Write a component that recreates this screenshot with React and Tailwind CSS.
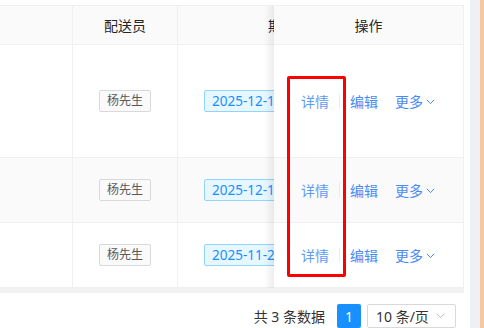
import React from "react";

const font = { fontFamily: '"Noto Sans", "Noto Sans CJK SC", sans-serif' };

function Chevron({ className }) {
  return (
    <svg className={className} width="9" height="6" viewBox="0 0 9 6" fill="none">
      <path d="M0.8 0.8 L4.5 4.6 L8.2 0.8" stroke="currentColor" strokeWidth="1" />
    </svg>
  );
}

const rows = [
  { h: "h-[113px]", bg: "bg-white", date: "2025-12-15 09:00-18:00" },
  { h: "h-[65px]", bg: "bg-[#fafafa]", date: "2025-12-12 09:00-18:00" },
  { h: "h-[65px]", bg: "bg-white", date: "2025-11-28 09:00-18:00" },
];

export default function App() {
  return (
    <div className="w-[484px] h-[328px] bg-white flex overflow-hidden text-[14px] text-[#262626]" style={font}>
      <div className="w-[464px] flex-none flex flex-col pt-[5px]">
        <div className="flex border-t border-r border-[#f0f0f0]">
          {/* scrolling area */}
          <div className="w-[274px] flex-none overflow-hidden">
            <div className="w-[520px]">
              <div className="flex h-[39px] bg-[#fafafa] border-b border-[#f0f0f0]">
                <div className="w-[73px] flex-none border-r border-[#f0f0f0]" />
                <div className="w-[105px] flex-none border-r border-[#f0f0f0] flex items-center justify-center">配送员</div>
                <div className="w-[266px] flex-none flex items-center pl-[90px]">期望送达时间</div>
              </div>
              {rows.map((r, i) => (
                <div key={i} className={`flex ${r.h} ${r.bg} border-b border-[#f0f0f0]`}>
                  <div className="w-[73px] flex-none border-r border-[#f0f0f0]" />
                  <div className="w-[105px] flex-none border-r border-[#f0f0f0] flex items-center justify-center">
                    <span className="h-[22px] px-[7px] border border-[#d9d9d9] bg-[#fafafa] rounded-[2px] text-[12px] leading-[20px] text-[#595959]">
                      杨先生
                    </span>
                  </div>
                  <div className="w-[266px] flex-none flex items-center pl-[26px]">
                    <span className="h-[22px] px-[7px] border border-[#91d5ff] bg-[#e6f7ff] rounded-[2px] text-[13.5px] leading-[20px] text-[#1890ff] whitespace-nowrap">
                      {r.date}
                    </span>
                  </div>
                </div>
              ))}
            </div>
          </div>
          {/* fixed right column */}
          <div className="w-[189px] flex-none relative">
            <div className="absolute left-[-10px] top-0 bottom-0 w-[10px] bg-gradient-to-r from-transparent to-[rgba(0,0,0,0.07)]" />
            <div className="h-[39px] bg-[#fafafa] border-b border-[#f0f0f0] flex items-center justify-center">操作</div>
            {rows.map((r, i) => (
              <div key={i} className={`${r.h} ${r.bg} border-b border-[#f0f0f0] flex items-center pl-[27px]`}>
                <span className="text-[#5e9bf7]">详情</span>
                <span className="w-px h-[14px] bg-[#ebebeb] mx-[10px]" />
                <span className="text-[#4a8af4]">编辑</span>
                <span className="text-[#4a8af4] ml-[17px]">更多</span>
                <Chevron className="text-[#4a8af4] ml-[3px] mt-[2px]" />
              </div>
            ))}
            <div className="absolute left-[13px] top-[70px] w-[59px] h-[201px] border-[3px] border-[#ff0000] rounded-[2px]" />
          </div>
        </div>
        <div className="h-[9px] bg-[#f1f1f1]" />
        <div className="flex items-center justify-end pr-[8px] mt-[11px] h-[24px]">
          <span className="text-[#333] mr-[12px]">共 3 条数据</span>
          <span className="w-[24px] h-[24px] bg-[#1890ff] text-white flex items-center justify-center rounded-[2px]">1</span>
          <span className="ml-[6px] w-[89px] h-[24px] border border-[#d9d9d9] rounded-[2px] flex items-center pl-[8px] pr-[10px] justify-between">
            <span className="text-[#333]">10 条/页</span>
            <Chevron className="text-[#bfbfbf]" />
          </span>
        </div>
      </div>
      <div className="w-[6px] flex-none" />
      <div className="w-[10px] flex-none bg-[#eef0f5]" />
      <div className="w-[4px] flex-none bg-[#f6c8a0]" />
    </div>
  );
}
